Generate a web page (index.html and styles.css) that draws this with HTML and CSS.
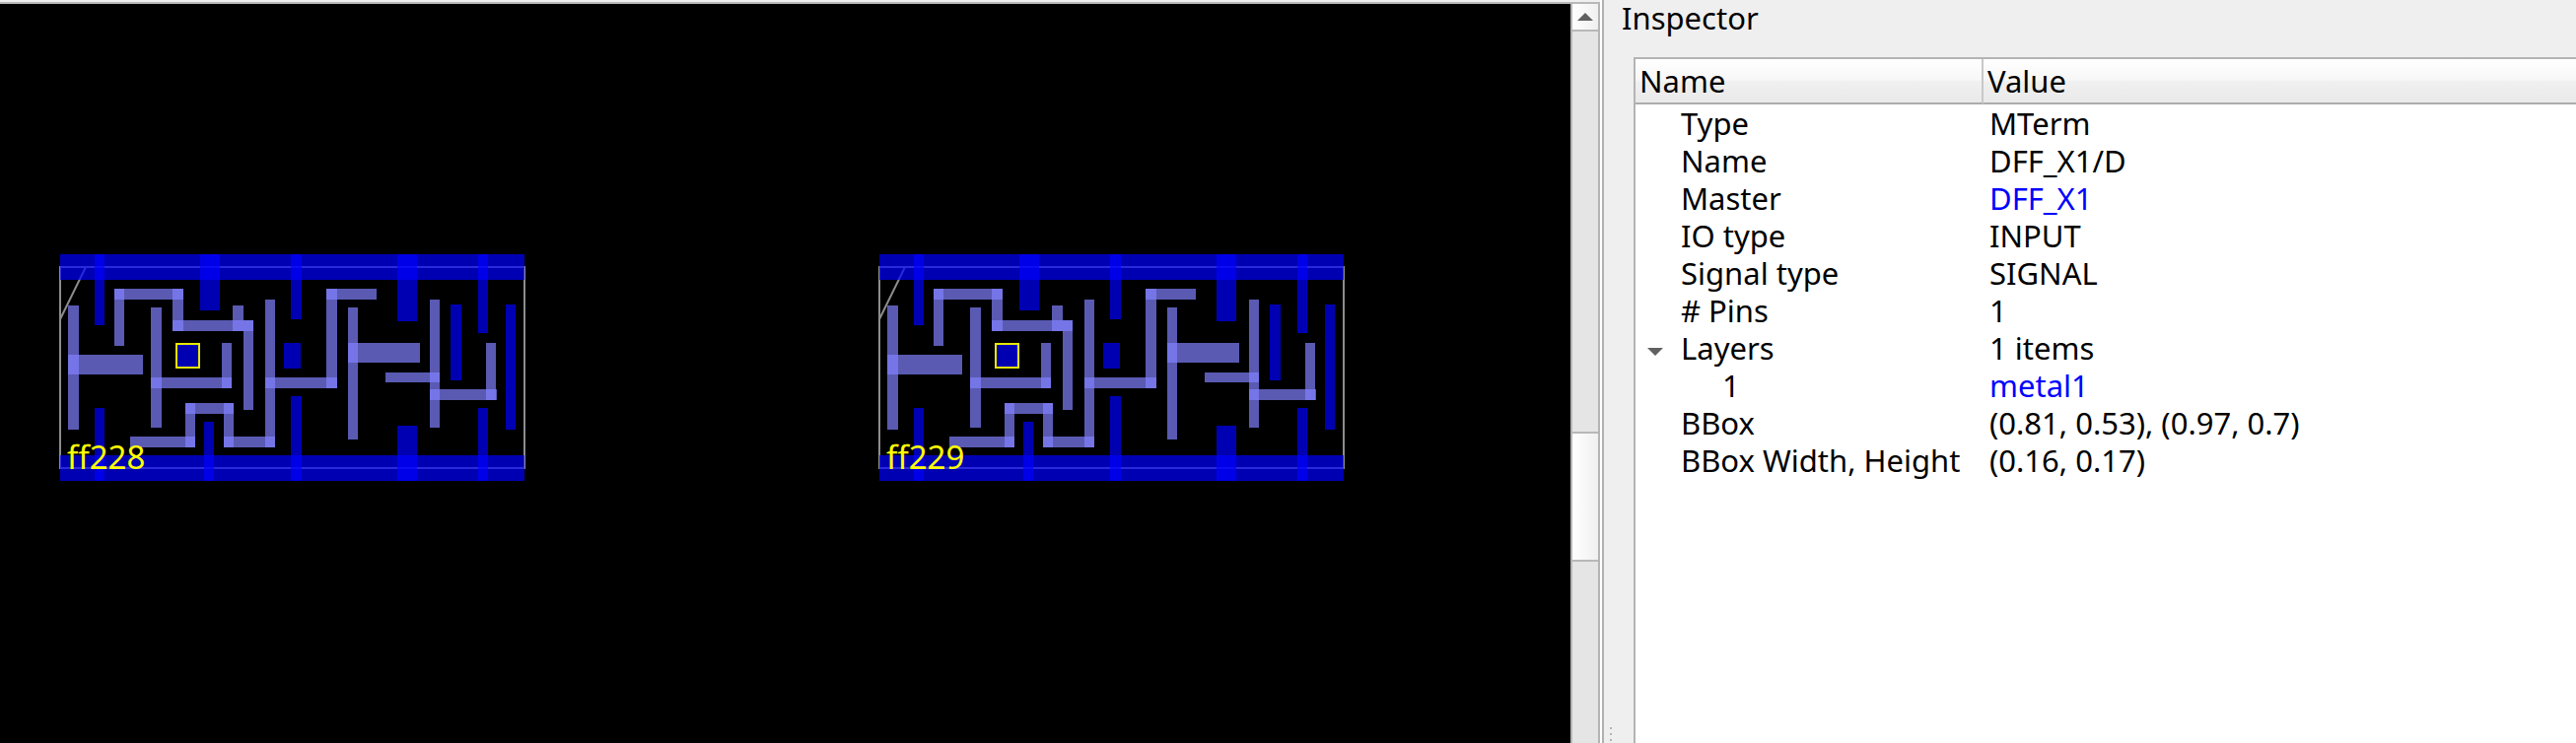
FILE: index.html
```
<!DOCTYPE html>
<html lang="en">
<head>
<meta charset="utf-8">
<title>Layout viewer</title>
<link rel="stylesheet" href="styles.css">
</head>
<body>
<main class="window">
  <section class="viewer" aria-label="Layout">
    <svg class="canvas" aria-label="Cells ff228 and ff229">
      <defs>
        <g id="dff">
          <path class="outline" d="M11 21H482V225H11ZM11 74L37 21"/>
          <g class="rail">
            <rect x="11" y="8" width="471" height="26"/>
            <rect x="11" y="212" width="471" height="26"/>
            <rect x="46" y="8" width="10" height="72"/>
            <rect x="153" y="8" width="20" height="57"/>
            <rect x="245" y="8" width="11" height="66"/>
            <rect x="353" y="8" width="20" height="68"/>
            <rect x="435" y="8" width="10" height="80"/>
            <rect x="46" y="164" width="10" height="74"/>
            <rect x="157" y="178" width="10" height="60"/>
            <rect x="245" y="152" width="11" height="86"/>
            <rect x="353" y="182" width="20" height="56"/>
            <rect x="435" y="164" width="10" height="74"/>
            <rect x="238" y="98" width="17" height="26"/>
            <rect x="407" y="59" width="11" height="77"/>
            <rect x="463" y="59" width="10" height="127"/>
            <rect x="129" y="98" width="24" height="26"/>
          </g>
          <g class="wire">
            <rect x="19" y="60" width="11" height="126"/>
            <rect x="19" y="110" width="76" height="20"/>
            <rect x="66" y="43" width="10" height="58"/>
            <rect x="66" y="43" width="70" height="11"/>
            <rect x="125" y="43" width="11" height="43"/>
            <rect x="125" y="75" width="82" height="11"/>
            <rect x="186" y="60" width="11" height="26"/>
            <rect x="197" y="75" width="10" height="91"/>
            <rect x="103" y="62" width="11" height="122"/>
            <rect x="103" y="133" width="82" height="11"/>
            <rect x="175" y="98" width="10" height="46"/>
            <rect x="82" y="193" width="66" height="11"/>
            <rect x="138" y="159" width="10" height="45"/>
            <rect x="138" y="159" width="49" height="11"/>
            <rect x="177" y="159" width="10" height="45"/>
            <rect x="177" y="193" width="52" height="11"/>
            <rect x="219" y="54" width="10" height="150"/>
            <rect x="219" y="133" width="73" height="11"/>
            <rect x="281" y="43" width="11" height="101"/>
            <rect x="281" y="43" width="51" height="11"/>
            <rect x="303" y="62" width="10" height="134"/>
            <rect x="303" y="98" width="73" height="20"/>
            <rect x="341" y="128" width="55" height="10"/>
            <rect x="386" y="54" width="10" height="130"/>
            <rect x="386" y="145" width="68" height="11"/>
            <rect x="443" y="98" width="10" height="58"/>
          </g>
          <rect class="pin" x="129" y="99" width="23" height="24"/>
        </g>
      </defs>
      <g transform="translate(50 246)">
        <use href="#dff"/>
        <text class="label" x="18" y="226">ff228</text>
      </g>
      <g transform="translate(881 246)">
        <use href="#dff"/>
        <text class="label" x="18" y="226">ff229</text>
      </g>
    </svg>
    <div class="scrollbar">
      <button class="step" aria-label="Scroll up"><svg class="up" viewBox="0 0 16 8"><path d="M8 0L16 8H0Z"/></svg></button>
      <div class="thumb"></div>
    </div>
  </section>
  <div class="splitter"></div>
  <aside class="dock">
    <h1 class="title">Inspector</h1>
    <div class="panel">
      <div class="grip"><i></i><i></i><i></i></div>
      <div class="tree">
        <table class="props">
          <colgroup><col class="col-name"><col></colgroup>
          <thead><tr><th>Name</th><th>Value</th></tr></thead>
          <tbody>
            <tr><td>Type</td><td>MTerm</td></tr>
            <tr><td>Name</td><td>DFF_X1/D</td></tr>
            <tr><td>Master</td><td><a href="#master">DFF_X1</a></td></tr>
            <tr><td>IO type</td><td>INPUT</td></tr>
            <tr><td>Signal type</td><td>SIGNAL</td></tr>
            <tr><td># Pins</td><td>1</td></tr>
            <tr><td class="parent"><button class="toggle" aria-label="Collapse Layers" aria-expanded="true"><svg class="down" viewBox="0 0 16 8"><path d="M0 0H16L8 8Z"/></svg></button>Layers</td><td>1 items</td></tr>
            <tr><td class="child">1</td><td><a href="#metal1">metal1</a></td></tr>
            <tr><td>BBox</td><td>(0.81, 0.53), (0.97, 0.7)</td></tr>
            <tr><td>BBox Width, Height</td><td>(0.16, 0.17)</td></tr>
          </tbody>
        </table>
      </div>
    </div>
  </aside>
</main>
</body>
</html>
```
FILE: styles.css
```
* { box-sizing: border-box; }
body {
  margin: 0;
  background: #efefef;
  color: #000;
  font: 31px/38px "Noto Sans", "Open Sans", sans-serif;
}
.window { display: flex; min-height: 100vh; }
.viewer {
  flex: 1623 1 0;
  display: flex;
  margin-top: 2px;
  border-top: 2px solid #b8b8b8;
}
.canvas { flex: 1; min-width: 0; background: #000; }
.outline { fill: none; stroke: #8c8c8c; stroke-width: 2; }
.rail { fill: #00f; fill-opacity: 0.7; }
.wire { fill: #8080ff; fill-opacity: 0.7; }
.pin { fill: none; stroke: #e8e800; stroke-width: 2; }
.label { fill: #ff0; font-size: 33px; }

.scrollbar {
  flex: none;
  width: 30px;
  display: flex;
  flex-direction: column;
  border: solid #b4b4b4;
  border-width: 0 2px;
  background: #e5e5e5;
}
.step {
  height: 28px;
  padding: 0;
  display: grid;
  place-items: center;
  border: 0;
  border-bottom: 2px solid #b8b8b8;
  background: linear-gradient(90deg, #fff, #f0f0f0);
}
.up, .down { width: 16px; height: 8px; fill: #606060; display: block; }
.thumb {
  height: 132px;
  margin-top: 406px;
  border: solid #b8b8b8;
  border-width: 2px 0;
  background: linear-gradient(90deg, #fff, #f0f0f0);
}
.splitter { flex: none; width: 4px; background: #fff; border-right: 2px solid #b0b0b0; }
.dock { flex: 986 1 0; display: flex; flex-direction: column; min-width: 0; }
.grip {
  flex: none;
  width: 30px;
  display: flex;
  flex-direction: column;
  justify-content: flex-end;
  gap: 4px;
  padding: 0 0 2px 6px;
}
.grip i { width: 2px; height: 2px; background: #b4b4b4; }
.panel { flex: 1; display: flex; }
.title { margin: 0; padding: 0 18px 22px; font-size: 31px; font-weight: 400; line-height: 36px; }
.tree { flex: 1; min-width: 0; background: #fff; border: solid #b4b4b4; border-width: 2px 0 0 2px; }
.props { width: 100%; table-layout: fixed; border-collapse: separate; border-spacing: 0; }
.col-name { width: 353px; }
th {
  height: 46px;
  padding: 0 4px;
  text-align: left;
  font-weight: 400;
  border-bottom: 2px solid #acacac;
  background: linear-gradient(#fff, #f7f7f7 48%, #f0f0f0 52%, #e9e9e9);
}
th:first-child { border-right: 2px solid #c8c8c8; }
td { padding: 0 0 0 6px; white-space: nowrap; }
td:first-child { padding-left: 46px; }
td:first-child.child { padding-left: 88px; }
td:first-child.parent { padding-left: 12px; }
.toggle {
  width: 34px;
  height: 16px;
  padding: 0;
  border: 0;
  background: none;
  display: inline-block;
  vertical-align: middle;
}
a { color: #00f; text-decoration: none; }
```
